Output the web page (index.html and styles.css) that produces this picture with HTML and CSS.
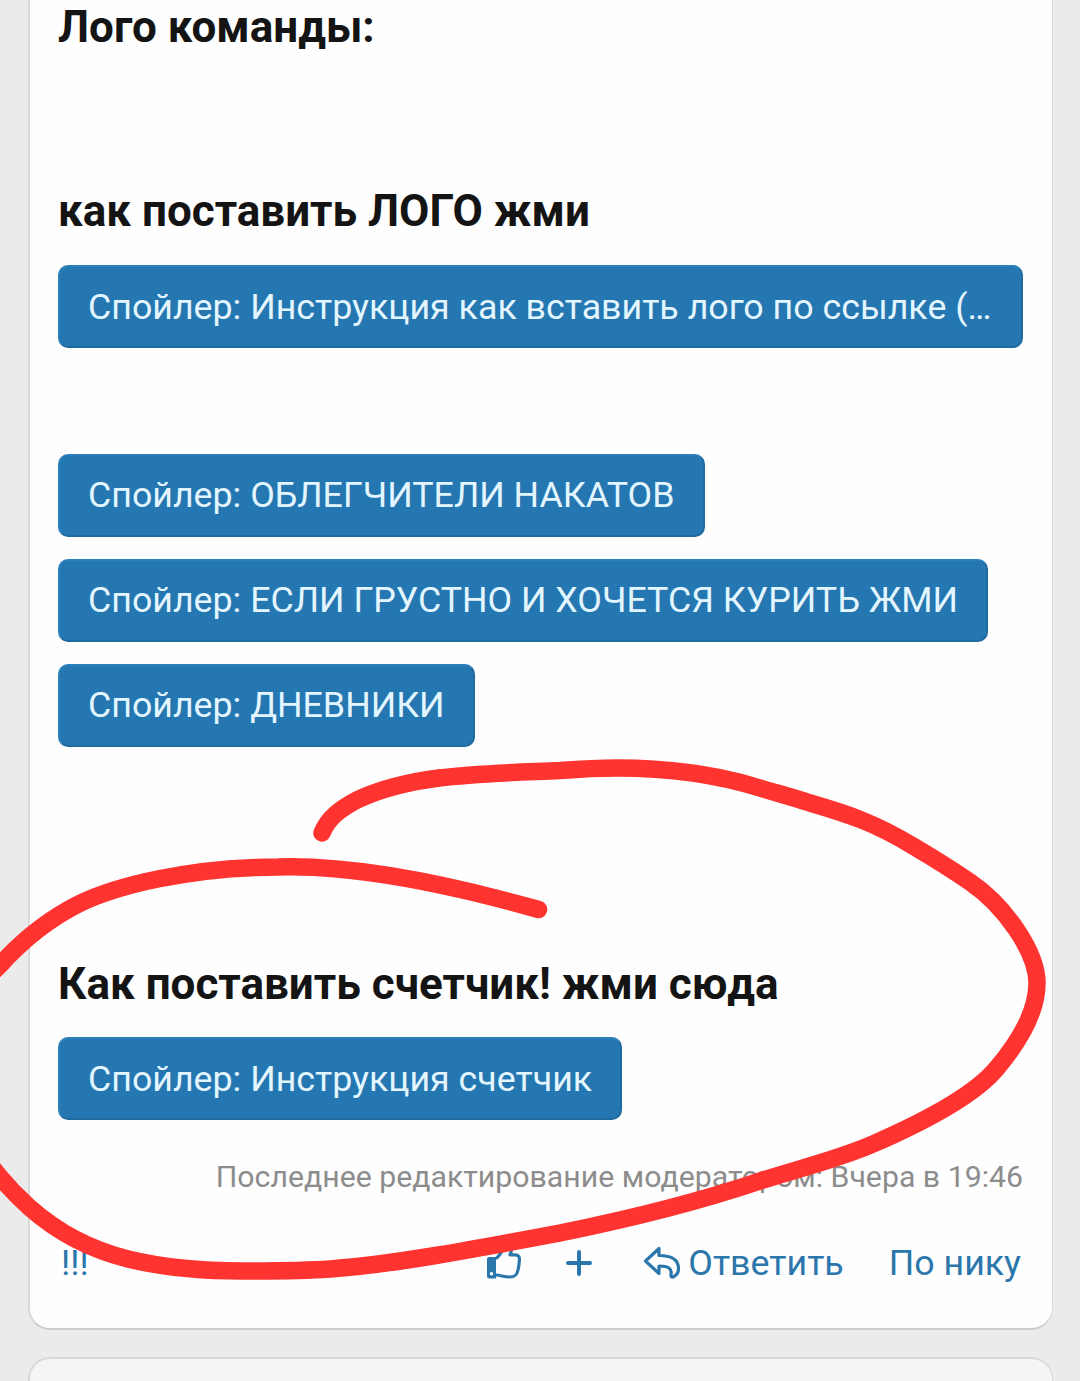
FILE: index.html
```html
<!DOCTYPE html>
<html lang="ru">
<head>
<meta charset="utf-8">
<title>Лого команды</title>
<link rel="stylesheet" href="styles.css">
</head>
<body>
<main class="thread">
  <article class="post">
    <section class="block block-logo">
      <h2 class="title">Лого команды:</h2>
    </section>
    <section class="block block-how">
      <h2 class="title">как поставить ЛОГО жми</h2>
      <button class="spoiler spoiler-wide">Спойлер: Инструкция как вставить лого по ссылке (…</button>
    </section>
    <section class="block block-list">
      <button class="spoiler">Спойлер: ОБЛЕГЧИТЕЛИ НАКАТОВ</button>
      <button class="spoiler">Спойлер: ЕСЛИ ГРУСТНО И ХОЧЕТСЯ КУРИТЬ ЖМИ</button>
      <button class="spoiler">Спойлер: ДНЕВНИКИ</button>
    </section>
    <section class="block">
      <h2 class="title">Как поставить счетчик! жми сюда</h2>
      <button class="spoiler spoiler-last">Спойлер: Инструкция счетчик</button>
    </section>
    <p class="edited">Последнее редактирование модератором: Вчера в 19:46</p>
    <footer class="actions">
      <a class="report">!!!</a>
      <a class="like"><svg class="icon" viewBox="0 0 36 36" width="36" height="36"><path d="M2 14H9V35.500H2Q0 35.500 0 33.500V16Q0 14 2 14ZM4.500 29A1.700 1.700 0 1 0 4.500 32.400A1.700 1.700 0 1 0 4.500 29Z" fill="currentColor" fill-rule="evenodd"/><path d="M9 15.500C12 14 13.500 9 17 6.500C19.500 4.500 18 1.500 20.500 1.500C26 1.500 25 7 23 11.800H28C32 11.800 32.600 14 32.400 17C32.200 21 31.800 24 31 27C30 32 28 34 23 34C17 34 14 32.300 9 32" fill="none" stroke="currentColor" stroke-width="3.200" stroke-linejoin="round"/></svg></a>
      <a class="plus"><svg class="icon" viewBox="0 0 26 26" width="26" height="26"><path d="M13 2v22M2 13h22" fill="none" stroke="currentColor" stroke-width="4" stroke-linecap="round"/></svg></a>
      <a class="reply"><svg class="icon" viewBox="0 0 38 36" width="38" height="36"><path d="M2.500 16L16 3.500V10.500C28 10.500 35.500 14.500 35.500 23.500C35.500 28 32.500 31 30 32C28.500 32.500 27.800 31.500 28 30C29 23.500 25.500 21 16 21V28.500Z" fill="none" stroke="currentColor" stroke-width="3.200" stroke-linejoin="round"/></svg><span>Ответить</span></a>
      <a class="nick">По нику</a>
    </footer>
  </article>
  <article class="post post-next"></article>
</main>
<!-- freehand marker stroke over the page -->
<svg class="marker" viewBox="0 0 1080 1381" width="1080" height="1381"><path d="M322 833C328 818 340 809 357 800C412 774 480 774 560 770.500C580 769 600 768 617 768C665 768 715 774 760 788C780 794 795 798 810 803C848 814 875 823 913 846C935 859 951 869 970 882C1005 906 1037 952 1037 983C1037 1012 1018 1043 997 1068C974 1096 919 1124 873 1144C836 1160 797 1169 760 1181C695 1203 629 1219 560 1233C475 1249 390 1265 330 1269C300 1271 270 1271 243 1271C200 1271 165 1268 128 1259C92 1250 57 1232 29 1207C19 1198 10 1189 0 1177L-20 1153M-20 985L0 965C20 943 45 921 78.600 904C115 886 190 867 278 867C345 865 430 879 538.600 909.500"/></svg>
</body>
</html>
```
FILE: styles.css
```css
* { box-sizing: border-box; }
html, body { margin: 0; height: 1381px; overflow: hidden; }
body {
  position: relative;
  background: #ebebeb;
  font-family: Roboto, "Liberation Sans", sans-serif;
  color: #141414;
}
.thread {
  display: flex;
  flex-direction: column;
  gap: 27px;
  height: 1381px;
  padding: 0 27px 0 28px;
  overflow: hidden;
}
.post {
  flex: none;
  height: 1330px;
  padding: 0 29px 0 28px;
  background: #fefefe;
  border: 2px solid #d8d8d8;
  border-width: 0 1px 2px 2px;
  border-bottom-color: #cbcbcb;
  border-radius: 0 0 22px 22px;
}
.post-next {
  height: 60px;
  background: #f5f5f5;
  border-width: 2px 1px 0 2px;
  border-color: #d8d8d8;
  border-radius: 22px 22px 0 0;
}
.block { display: flex; flex-direction: column; align-items: flex-start; }
.block-logo { height: 181px; }
.block-how { height: 273px; }
.block-list { height: 500px; gap: 22px; }
.title {
  margin: 0 0 23px;
  font-size: 44px;
  line-height: 60px;
  font-weight: 700;
  white-space: nowrap;
}
.block-logo .title { margin-top: -3px; }
.block-how .title { margin-bottom: 24px; }
.spoiler {
  display: block;
  height: 83px;
  margin: 0;
  padding: 0 28px;
  border: 2px solid;
  border-color: #2a80bc #206a9e #206a9e #2a80bc;
  border-radius: 10px;
  background: #2577b1;
  color: #e3f6ff;
  font: 400 35.750px/79px Roboto, "Liberation Sans", sans-serif;
  white-space: nowrap;
  text-align: left;
}
.spoiler-wide { width: 100%; padding-top: 1px; }
.spoiler-last { padding-top: 1px; }
.edited {
  margin: 36px 0 0;
  font-size: 30.250px;
  line-height: 42px;
  color: #8c8c8c;
  text-align: right;
  white-space: nowrap;
}
.actions {
  display: flex;
  align-items: center;
  height: 50px;
  margin-top: 40px;
  padding-right: 2px;
  color: #2b76aa;
  font-size: 35.750px;
  line-height: 50px;
  white-space: nowrap;
}
.icon { display: block; overflow: visible; }
.report { margin-right: auto; padding-left: 3px; }
.like { margin: 0 43px 4px 0; }
.plus { margin-right: 51px; }
.reply { display: flex; align-items: center; gap: 7px; margin-right: 45px; }
.marker {
  position: absolute;
  top: 0;
  left: 0;
  fill: none;
  stroke: #ff3330;
  stroke-width: 17.500px;
  stroke-linecap: round;
  stroke-linejoin: round;
}
```
